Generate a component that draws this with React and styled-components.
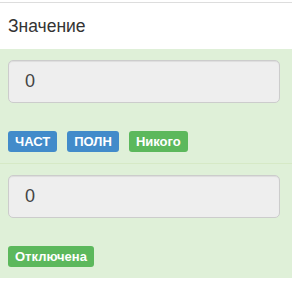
import React from "react";
import styled, { createGlobalStyle } from "styled-components";

const Global = createGlobalStyle`
  html, body { margin: 0; padding: 0; background: #fff; }
  body { font-family: "Liberation Sans", Arial, sans-serif; color: #333; }
`;

const Panel = styled.div`
  width: 292px;
  padding-top: 2px;
`;

const Header = styled.div`
  border-top: 1px solid #ddd;
  height: 46px;
  display: flex;
  align-items: center;
  padding-left: 8px;
  font-size: 17.5px;
  color: #333;
  background: #fff;
`;

const Section = styled.div`
  background: #dff0d8;
  padding: 11px 12px 11px 8px;
  display: flex;
  flex-direction: column;
  gap: 28px;
  border-top: ${(p) => (p.$divided ? "1px solid #d6e9c6" : "none")};
`;

const Field = styled.div`
  box-sizing: border-box;
  height: 43px;
  background: #eee;
  border: 1px solid #ccc;
  border-radius: 5px;
  box-shadow: inset 0 1px 1px rgba(0, 0, 0, 0.075);
  display: flex;
  align-items: center;
  padding-left: 16px;
  font-size: 18px;
  color: #444;
`;

const Labels = styled.div`
  display: flex;
  gap: 10px;
`;

const Label = styled.span`
  box-sizing: border-box;
  height: 21px;
  display: inline-flex;
  align-items: center;
  padding: 0 7px;
  border-radius: 3px;
  font-size: 13px;
  font-weight: bold;
  color: #fff;
  background: ${(p) => (p.$kind === "primary" ? "#428bca" : "#5cb85c")};
`;

export default function App() {
  return (
    <Panel>
      <Global />
      <Header>Значение</Header>
      <Section>
        <Field>0</Field>
        <Labels>
          <Label $kind="primary">ЧАСТ</Label>
          <Label $kind="primary">ПОЛН</Label>
          <Label $kind="success">Никого</Label>
        </Labels>
      </Section>
      <Section $divided>
        <Field>0</Field>
        <Labels>
          <Label $kind="success">Отключена</Label>
        </Labels>
      </Section>
    </Panel>
  );
}
